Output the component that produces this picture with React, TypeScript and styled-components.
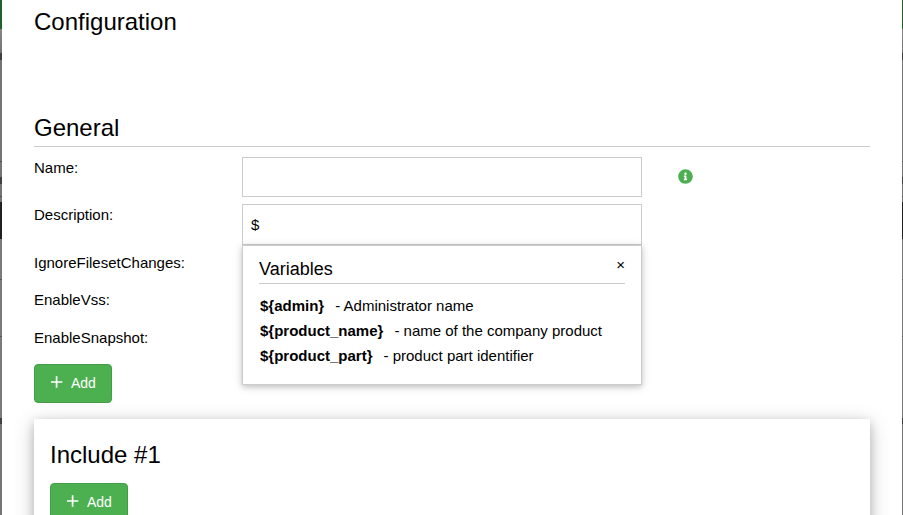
import React, { useState } from "react";
import styled, { createGlobalStyle } from "styled-components";
import { FaInfoCircle } from "react-icons/fa";

const GlobalStyle = createGlobalStyle`
  *, *::before, *::after { box-sizing: border-box; }
  html, body { margin: 0; height: 100%; overflow: hidden; }
  body {
    font-family: "Liberation Sans", Arial, sans-serif;
    font-size: 15px;
    line-height: 22px;
    color: #000;
  }
`;

const Backdrop = styled.div`
  height: 100vh;
  overflow: hidden;
  padding: 0 1px 0 2px;
  background: linear-gradient(
    #20622a 0 29px,
    #858585 29px,
    #747474 53px,
    #404040 53px 60px,
    #747474 60px 161px,
    #505050 161px 162px,
    #747474 162px 177px,
    #404040 177px 184px,
    #747474 184px 196px,
    #505050 196px 197px,
    #747474 197px 202px,
    #202020 202px 239px,
    #7b7b7b 239px 279px,
    #555 279px 280px,
    #7b7b7b 280px 336px,
    #555 336px 337px,
    #7b7b7b 337px 418px,
    #404040 418px 424px,
    #757575 424px
  );
`;

const Dialog = styled.main`
  min-height: 100%;
  padding: 4px 32px 0;
  background: #fff;
`;

const Heading = styled.h3`
  margin: 0;
  font-size: 24px;
  font-weight: 400;
  line-height: 36px;
`;

const SectionHeading = styled(Heading)`
  margin: 70px 0 10px;
  border-bottom: 1px solid #ccc;
`;

const Row = styled.div`
  display: grid;
  grid-template-columns: 208px minmax(0, 400px) 1fr;
  align-items: start;
  padding-bottom: 7px;
`;

const Options = styled.div`
  display: grid;
  grid-template-rows: repeat(3, 1fr);
  height: 112px;
`;

const Field = styled.div`
  position: relative;
`;

const TextInput = styled.input<{ $attached?: boolean }>`
  display: block;
  width: 100%;
  height: ${(p) => (p.$attached ? 41 : 40)}px;
  padding: 8px;
  border: 1px solid #ccc;
  border-radius: 0;
  background: #fff;
  color: #000;
  font: inherit;
  outline: none;
`;

const InfoButton = styled.button`
  display: flex;
  width: 15px;
  height: 15px;
  margin: 12px 0 0 36px;
  padding: 0;
  border: 0;
  background: none;
  color: #4caf50;
  font-size: 15px;
`;

const Popup = styled.section`
  position: absolute;
  z-index: 1;
  top: 100%;
  left: 0;
  width: 100%;
  padding: 10px 16px 16px;
  border: 1px solid #ccc;
  background: #fff;
  box-shadow: 0 2px 5px 0 rgba(0, 0, 0, 0.16), 0 2px 10px 0 rgba(0, 0, 0, 0.12);
`;

const PopupHeader = styled.header`
  display: flex;
  justify-content: space-between;
  align-items: flex-start;
  border-bottom: 1px solid #ccc;
`;

const PopupTitle = styled.h5`
  margin: 0;
  font-size: 18px;
  font-weight: 400;
  line-height: 27px;
`;

const CloseButton = styled.button`
  padding: 0;
  border: 0;
  background: none;
  color: #000;
  font: inherit;
  line-height: 18px;
`;

const Variables = styled.ul`
  margin: 0;
  padding: 9px 1px 0;
  list-style: none;
  line-height: 25px;
`;

const Variable = styled.li`
  display: flex;
  gap: 11px;
  white-space: nowrap;
`;

const AddButtonBase = styled.button`
  display: flex;
  align-items: center;
  gap: 8px;
  width: 78px;
  height: 39px;
  padding: 0 16px 2px;
  border: 1px solid #449d48;
  border-radius: 4px;
  background: #4caf50;
  color: #fff;
  font-family: inherit;
  font-size: 14px;
`;

const PlusIcon = styled.svg`
  flex: none;
  width: 12px;
  height: 14px;
`;

const Card = styled.section`
  margin-top: 16px;
  padding: 18px 16px 32px;
  background: #fff;
  box-shadow: 0 4px 10px 0 rgba(0, 0, 0, 0.2), 0 4px 20px 0 rgba(0, 0, 0, 0.19);
`;

const CardHeading = styled(Heading)`
  margin-bottom: 10px;
`;

function AddButton() {
  return (
    <AddButtonBase type="button">
      <PlusIcon viewBox="0 0 12 14" aria-hidden="true">
        <path d="M5.6 0.3v11.4M0 6h11.3" stroke="currentColor" strokeWidth="1.7" />
      </PlusIcon>
      Add
    </AddButtonBase>
  );
}

const variables = [
  { name: "${admin}", text: "- Administrator name" },
  { name: "${product_name}", text: "- name of the company product" },
  { name: "${product_part}", text: "- product part identifier" },
];

export default function App() {
  const [name, setName] = useState("");
  const [description, setDescription] = useState("$");
  const [open, setOpen] = useState(true);

  return (
    <Backdrop>
      <GlobalStyle />
      <Dialog>
        <Heading>Configuration</Heading>
        <SectionHeading>General</SectionHeading>
        <Row>
          <label htmlFor="name">Name:</label>
          <TextInput id="name" value={name} onChange={(e) => setName(e.target.value)} />
          <InfoButton type="button" aria-label="About the name">
            <FaInfoCircle />
          </InfoButton>
        </Row>
        <Row>
          <label htmlFor="description">Description:</label>
          <Field>
            <TextInput
              id="description"
              $attached
              value={description}
              onChange={(e) => {
                setDescription(e.target.value);
                setOpen(e.target.value.endsWith("$"));
              }}
            />
            {open && (
              <Popup>
                <PopupHeader>
                  <PopupTitle>Variables</PopupTitle>
                  <CloseButton type="button" aria-label="Close" onClick={() => setOpen(false)}>
                    ×
                  </CloseButton>
                </PopupHeader>
                <Variables>
                  {variables.map((v) => (
                    <Variable key={v.name}>
                      <b>{v.name}</b>
                      <span>{v.text}</span>
                    </Variable>
                  ))}
                </Variables>
              </Popup>
            )}
          </Field>
        </Row>
        <Options>
          <span>IgnoreFilesetChanges:</span>
          <span>EnableVss:</span>
          <span>EnableSnapshot:</span>
        </Options>
        <AddButton />
        <Card>
          <CardHeading>Include #1</CardHeading>
          <AddButton />
        </Card>
      </Dialog>
    </Backdrop>
  );
}
